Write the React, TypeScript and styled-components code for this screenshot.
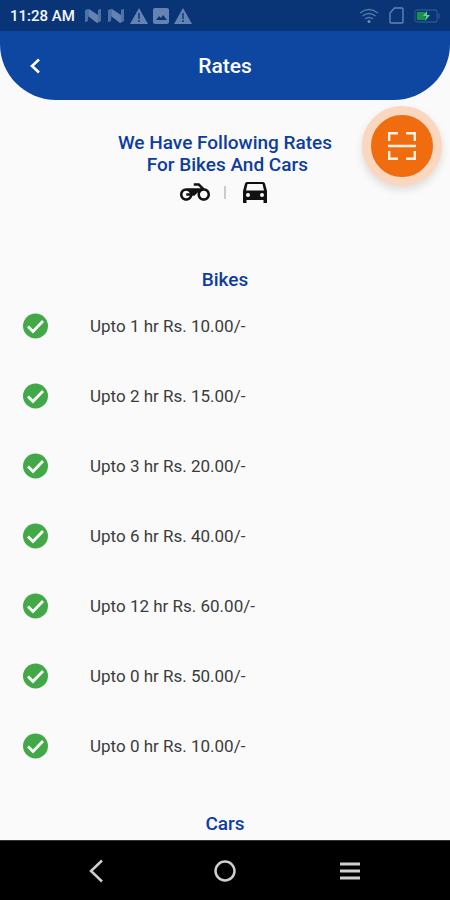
import React from "react";
import styled, { createGlobalStyle } from "styled-components";

const GlobalStyle = createGlobalStyle`
  * { box-sizing: border-box; }
  body {
    margin: 0;
    background: #fafafa;
    font-family: Roboto, "Liberation Sans", sans-serif;
  }
  button {
    border: 0;
    padding: 0;
    background: none;
    color: inherit;
    font: inherit;
    cursor: pointer;
  }
  svg { display: block; }
`;

const Screen = styled.div`
  display: flex;
  flex-direction: column;
  height: 100vh;
  overflow: hidden;
`;

const Top = styled.div`
  background: #0d47a1;
  border-radius: 0 0 56px 56px;
  overflow: hidden;
  flex: none;
`;

const StatusBar = styled.div`
  display: flex;
  align-items: center;
  justify-content: space-between;
  height: 31px;
  padding: 0 10px;
  background: #093576;
`;

const StatusGroup = styled.div<{ $gap: number }>`
  display: flex;
  align-items: center;
  gap: ${(p) => p.$gap}px;
  color: #6483b3;
`;

const Clock = styled.time`
  margin-right: 4px;
  color: #f4f7fc;
  font-size: 15px;
  font-weight: 500;
`;

const TitleBar = styled.header`
  display: grid;
  grid-template-columns: 70px 1fr 70px;
  align-items: center;
  height: 69px;
  color: #fff;
`;

const BackButton = styled.button`
  display: flex;
  align-items: center;
  justify-content: center;
  height: 48px;
`;

const Title = styled.h1`
  margin: 0;
  text-align: center;
  font-size: 21px;
  line-height: 24px;
  font-weight: 500;
`;

const Content = styled.main`
  position: relative;
  flex: 1;
  min-height: 0;
  overflow: hidden;
  padding-top: 32px;
`;

const Heading = styled.h2`
  margin: 0;
  color: #0d3d9f;
  text-align: center;
  font-size: 19px;
  line-height: 22px;
  font-weight: 500;
`;

const VehicleRow = styled.div`
  display: flex;
  align-items: center;
  justify-content: center;
  gap: 14px;
  height: 32px;
  margin-bottom: 61px;
  color: #111;
`;

const Divider = styled.span`
  width: 2px;
  height: 13px;
  background: #ccc;
`;

const RateList = styled.ul`
  margin: 0 0 32px;
  padding: 0;
  list-style: none;
`;

const RateRow = styled.li`
  display: flex;
  align-items: center;
  gap: 40px;
  height: 70px;
  padding: 0 20px;
  color: #3c3c3c;
  font-size: 17px;
`;

const ScanButton = styled.button`
  position: absolute;
  top: 6px;
  right: 8px;
  display: flex;
  align-items: center;
  justify-content: center;
  width: 80px;
  height: 80px;
  border: 9px solid #fcd7bf;
  border-radius: 50%;
  background: #ef6c0f;
  box-shadow: 0 4px 8px rgba(0, 0, 0, 0.12);
`;

const NavBar = styled.nav`
  display: grid;
  grid-template-columns: 1fr 125px 125px 125px 1fr;
  flex: none;
  height: 60px;
  border-top: 1px solid #333;
  background: #000;
  color: #cfcfcf;
`;

const NavButton = styled.button`
  display: flex;
  align-items: center;
  justify-content: center;

  &:first-child { grid-column: 2; }
`;

const AndroidN = () => (
  <svg width="18" height="16" viewBox="0 0 18 16" aria-hidden="true">
    <path d="M1 2 5 1 14 7V2l3-1v12l-4 2-9-7v5l-3 1z" fill="currentColor" />
    <path d="M1 2 5 1v7l-1 5-3 1zM14 2l3-1v12l-3 1z" fill="#3d639b" opacity=".55" />
  </svg>
);

const Warning = () => (
  <svg width="18" height="16" viewBox="0 0 18 16" aria-hidden="true">
    <path d="M9 0 18 16H0z" fill="currentColor" />
    <path d="M9 5v6M9 12v2" stroke="#234b87" strokeWidth="2" />
  </svg>
);

const Picture = () => (
  <svg width="16" height="16" viewBox="0 0 16 16" aria-hidden="true">
    <rect width="16" height="16" rx="2" fill="currentColor" />
    <path d="m3 12 3-4 2 2 2-3 4 5z" fill="#0d3470" />
  </svg>
);

const Wifi = () => (
  <svg width="20" height="16" viewBox="0 0 20 16" fill="none" stroke="#5678ac" strokeWidth="1.4" aria-hidden="true">
    <path d="M1 5q9-7 18 0M3.500 8q6.500-5 13 0M6 11q4-3 8 0" />
    <circle cx="10" cy="13.500" r="1.500" fill="#6e8dbb" stroke="none" />
  </svg>
);

const Sim = () => (
  <svg width="15" height="17" viewBox="0 0 15 17" fill="none" stroke="#6483b3" strokeWidth="1.4" aria-hidden="true">
    <path d="M5.500 1H13q1 0 1 1v13q0 1-1 1H2q-1 0-1-1V6z" />
  </svg>
);

const Battery = () => (
  <svg width="26" height="14" viewBox="0 0 26 14" aria-hidden="true">
    <rect x="1" y="1" width="22" height="12" rx="2" fill="none" stroke="#2b5189" strokeWidth="1.300" />
    <path d="M24.800 4.500v5" stroke="#2b5189" strokeWidth="1.500" />
    <rect x="3" y="3" width="8" height="8" fill="#159447" />
    <path d="m13 2-4 5h3l-1 5 5-6h-3z" fill="#6cc795" />
  </svg>
);

const Motorcycle = () => (
  <svg width="30" height="30" viewBox="0 0 24 24" fill="currentColor" role="img" aria-label="Bikes">
    <path d="M19.440 9.030 15.410 5H11v2h3.590l2 2H5c-2.800 0-5 2.200-5 5s2.200 5 5 5c2.460 0 4.450-1.690 4.900-4h1.650l2.770-2.770c-.21.54-.32 1.140-.32 1.770 0 2.800 2.200 5 5 5s5-2.200 5-5c0-2.650-1.970-4.770-4.560-4.970zM7.820 15C7.400 16.150 6.280 17 5 17c-1.630 0-3-1.370-3-3s1.370-3 3-3c1.280 0 2.400.85 2.820 2H5v2h2.820zM19 17c-1.660 0-3-1.340-3-3s1.340-3 3-3 3 1.340 3 3-1.340 3-3 3z" />
  </svg>
);

const Car = () => (
  <svg width="30" height="30" viewBox="0 0 30 30" fill="currentColor" role="img" aria-label="Cars">
    <path
      fillRule="evenodd"
      d="M7 5h16q1.500 0 2 1.500L27 14v12h-3.500v-3h-17v3H3V14l2-7.500Q5.500 5 7 5zM7.500 7 6 13.500h18L22.500 7zM8 16a2 2 0 1 0 0 4 2 2 0 0 0 0-4zM22 16a2 2 0 1 0 0 4 2 2 0 0 0 0-4z"
    />
  </svg>
);

const Check = () => (
  <svg width="30" height="30" viewBox="0 0 30 30" fill="none" aria-hidden="true">
    <circle cx="15.500" cy="15" r="12.500" fill="#43a948" />
    <path d="m8 15.500 5 5L23 10" stroke="#fff" strokeWidth="2.800" />
  </svg>
);

const rates = [
  "Upto 1 hr Rs. 10.00/-",
  "Upto 2 hr Rs. 15.00/-",
  "Upto 3 hr Rs. 20.00/-",
  "Upto 6 hr Rs. 40.00/-",
  "Upto 12 hr Rs. 60.00/-",
  "Upto 0 hr Rs. 50.00/-",
  "Upto 0 hr Rs. 10.00/-",
];

export default function App() {
  return (
    <Screen>
      <GlobalStyle />
      <Top>
        <StatusBar>
          <StatusGroup $gap={5}>
            <Clock>11:28 AM</Clock>
            <AndroidN />
            <AndroidN />
            <Warning />
            <Picture />
            <Warning />
          </StatusGroup>
          <StatusGroup $gap={10}>
            <Wifi />
            <Sim />
            <Battery />
          </StatusGroup>
        </StatusBar>
        <TitleBar>
          <BackButton type="button" aria-label="Back">
            <svg width="12" height="16" viewBox="0 0 12 16" fill="none" stroke="currentColor" strokeWidth="2.600">
              <path d="M10 1.500 3 8l7 6.500" />
            </svg>
          </BackButton>
          <Title>Rates</Title>
        </TitleBar>
      </Top>
      <Content>
        <Heading>
          We Have Following Rates
          <br />
          &nbsp;For Bikes And Cars
        </Heading>
        <VehicleRow>
          <Motorcycle />
          <Divider />
          <Car />
        </VehicleRow>
        <section>
          <Heading>Bikes</Heading>
          <RateList>
            {rates.map((rate) => (
              <RateRow key={rate}>
                <Check />
                {rate}
              </RateRow>
            ))}
          </RateList>
        </section>
        <section>
          <Heading>Cars</Heading>
        </section>
        <ScanButton type="button" aria-label="Scan code">
          <svg width="28" height="28" viewBox="0 0 28 28" fill="none" stroke="#fff1e6" strokeWidth="2.400">
            <path d="M1.200 9V1.200H10M18 1.200h8.800V9M26.800 19v7.800H18M10 26.800H1.200V19M0 14h28" />
          </svg>
        </ScanButton>
      </Content>
      <NavBar aria-label="System navigation">
        <NavButton type="button" aria-label="Back">
          <svg width="24" height="24" viewBox="0 0 24 24" fill="none" stroke="currentColor" strokeWidth="2.500">
            <path d="M14 1.500 3 12l11 10.500" />
          </svg>
        </NavButton>
        <NavButton type="button" aria-label="Home">
          <svg width="24" height="24" viewBox="0 0 24 24" fill="none" stroke="currentColor" strokeWidth="2.500">
            <circle cx="12" cy="12" r="9.500" />
          </svg>
        </NavButton>
        <NavButton type="button" aria-label="Menu">
          <svg width="20" height="20" viewBox="0 0 20 20" stroke="currentColor" strokeWidth="3">
            <path d="M0 3h20M0 10h20M0 17h20" />
          </svg>
        </NavButton>
      </NavBar>
    </Screen>
  );
}
